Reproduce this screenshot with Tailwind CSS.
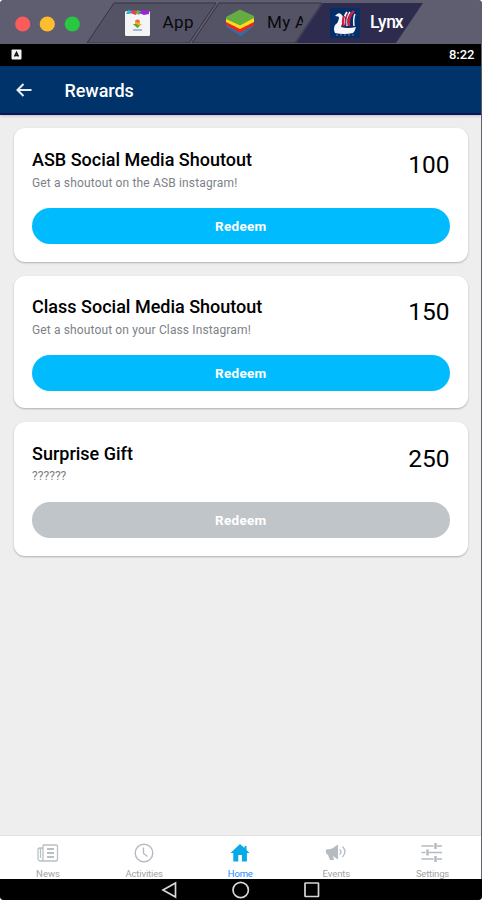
<!DOCTYPE html>
<html lang="en">
<head>
<meta charset="utf-8">
<title>Rewards</title>
<script src="https://cdn.jsdelivr.net/npm/@tailwindcss/browser@4"></script>
</head>
<body class="bg-white">
<div class="flex h-[900px] w-[482px] flex-col overflow-hidden rounded-[4px] bg-[#61616f] font-[Roboto,sans-serif]">
  <!-- Window title bar with tabs -->
  <header class="relative h-[43.500px] shrink-0 bg-[#5e5e70]">
    <svg class="absolute inset-0" width="482" height="43" viewBox="0 0 482 43">
      <path d="M87 43 114 3H216L189 43Z" fill="#535365" stroke="#343442"/>
      <path d="M192 43 219 3H322L295 43Z" fill="#535365" stroke="#343442"/>
      <path d="M296 43 323 3H423L396 43Z" fill="#2d2c4f"/>
      <circle cx="22.7" cy="24" r="7.6" fill="#fc5b5c"/>
      <circle cx="47.3" cy="24" r="7.6" fill="#fdbd2e"/>
      <circle cx="72.3" cy="24" r="7.6" fill="#28c940"/>
    </svg>
    <div class="relative flex h-[43px] items-center pt-[2px] pl-[124px] text-[17px] text-[#08080d]">
      <svg class="shrink-0" width="27" height="28" viewBox="0 0 27 28">
        <rect x="1" y="2" width="25" height="25" rx="1.5" fill="#f4f4f4"/>
        <path d="M2 5 4 1l4 1-2 3Z" fill="#22b9db"/><path d="M6 4 9 1l5 1-2 4Z" fill="#ef3b50"/><path d="M11 3 14 1l3 2-2 3Z" fill="#57bb46"/><path d="M15 4 18 1l7 1v3l-5 1Z" fill="#9c21da"/>
        <path d="M11 12q2.500-3 5 0v3h2l-4.500 4L9 15h2Z" fill="#f6ad20"/><path d="M11 12q2.500-3 5 0l-2 2Z" fill="#ed6554"/><path d="m9 15 4.500 4 2-2-3-2Z" fill="#50a944"/><path d="M9 21h9" stroke="#a3b9da" stroke-width="2"/>
      </svg>
      <span class="ml-[11.500px] w-[62px] tracking-[0.400px]">App</span>
      <svg class="shrink-0" width="31" height="29" viewBox="0 0 31 29">
        <path d="M1 14 15 6l14 7v5L16 28 1 19Z" fill="#2672b7"/>
        <path d="M1 13 15 6l14 6v5L15 25 1 17Z" fill="#e7281f"/>
        <path d="M1 11 15 5l14 5v4L15 21 1 14Z" fill="#ffdc19"/>
        <path d="M1 9 14 2q1-.5 2 0l13 6v2L16 17q-1 .5-2 0L1 11Z" fill="#65ad42"/>
      </svg>
      <span class="ml-[11.500px] w-[38px] overflow-hidden whitespace-nowrap tracking-[0.300px] [clip-path:polygon(0_0,100%_0,100%_25%,82%_100%,0_100%)]">My A</span>
      <svg class="ml-[25px] shrink-0" width="30" height="30" viewBox="0 0 30 30">
        <path d="M0 0h30v30H0Z" fill="#052f69"/>
        <path d="M5 8q3-4 6-2 3 3 2 6-1 4-2 7 7 2 15 0-1 4-3 6-9 2-18 0-2-4 0-8 4-3 4-8-2-1-4-1Z" fill="#f7f7fb"/>
        <path d="M17 4q-4 5-3 13" fill="none" stroke="#fff" stroke-width="1.800"/>
        <path d="M14 8q-2 6 0 10M24 3q-6 5-5 15" fill="none" stroke="#d81d43" stroke-width="2.300"/>
        <path d="M20 4q-5 6-3 14M25 6q-2 4-1 12" fill="none" stroke="#f4f5fa" stroke-width="1.500"/>
        <path d="M18 5q-3 6-2 12" fill="none" stroke="#d81d43" stroke-width="1.200"/>
        <path d="M6 27h18" fill="none" stroke="#7188ad" stroke-width="1" stroke-dasharray="2 2"/>
      </svg>
      <span class="ml-[10px] text-[17.500px] font-medium tracking-[-1.200px] text-white"><span class="tracking-[-0.300px]">Ly</span>nx</span>
    </div>
  </header>

  <!-- Android screen -->
  <main class="mr-[1.500px] flex min-h-0 flex-1 flex-col bg-[#eee]">
    <div class="flex h-[22px] shrink-0 items-center justify-between bg-black pr-[6px] pl-[11px]">
      <svg width="11" height="11" viewBox="0 0 11 11"><rect x=".5" y=".5" width="10" height="10" rx="1" fill="#f2f2f2"/><path d="m3.500 7.500 2-4 2 4M4 6.500h3" fill="none" stroke="#111" stroke-width="1.500"/></svg>
      <span class="mt-px text-[13px] font-medium text-white">8:22</span>
    </div>
    <div class="flex h-[49.500px] shrink-0 items-center border-b-2 border-[#0c1460] bg-[#003369] pl-[16px] text-white shadow-[0_1px_3px_#0003]">
      <svg class="mt-px" width="16" height="14" viewBox="0 0 16 14" fill="none" stroke="#e9edf5" stroke-width="2"><path d="M15.500 7H1.500M7.500 1l-6 6 6 6"/></svg>
      <h1 class="mt-[3px] ml-[32.500px] text-[18px] font-medium tracking-[-0.050px]">Rewards</h1>
    </div>

    <div class="flex min-h-0 flex-1 flex-col gap-[14px] pt-[13px] pr-[13px] pl-[14px]">
      <section class="h-[133.500px] rounded-[11px] bg-white px-[18px] pt-[21px] shadow-[0_1px_2px_#0004]">
        <div class="flex h-[59px] justify-between">
          <div>
            <h2 class="text-[18px] leading-[22px] font-medium text-black">ASB Social Media Shoutout</h2>
            <p class="mt-[2px] text-[12px] leading-[20px] tracking-[0.150px] text-[#7c8287]">Get a shoutout on the ASB instagram!</p>
          </div>
          <span class="text-[24.500px] leading-[32px] text-black">100</span>
        </div>
        <button class="block h-[35.500px] w-full rounded-full bg-[#00bcff] text-[13.500px] font-bold tracking-[0.300px] text-white">Redeem</button>
      </section>
      <section class="h-[132.500px] rounded-[11px] bg-white px-[18px] pt-[20.500px] shadow-[0_1px_2px_#0004]">
        <div class="flex h-[59px] justify-between">
          <div>
            <h2 class="text-[18px] leading-[22px] font-medium text-black">Class Social Media Shoutout</h2>
            <p class="mt-[2px] text-[12px] leading-[20px] tracking-[0.130px] text-[#7c8287]">Get a shoutout on your Class Instagram!</p>
          </div>
          <span class="text-[24.500px] leading-[32px] text-black">150</span>
        </div>
        <button class="block h-[35.500px] w-full rounded-full bg-[#00bcff] text-[13.500px] font-bold tracking-[0.300px] text-white">Redeem</button>
      </section>
      <section class="h-[133.500px] rounded-[11px] bg-white px-[18px] pt-[20.500px] shadow-[0_1px_2px_#0004]">
        <div class="flex h-[59.500px] justify-between">
          <div>
            <h2 class="text-[18px] leading-[22px] font-medium text-black">Surprise Gift</h2>
            <p class="mt-[1.500px] text-[12px] leading-[20px] tracking-[0.050px] text-[#7c8287]">??????</p>
          </div>
          <span class="text-[24.500px] leading-[32px] text-black">250</span>
        </div>
        <button class="block h-[35.500px] w-full rounded-full bg-[#c0c5c9] text-[13.500px] font-bold tracking-[0.300px] text-white">Redeem</button>
      </section>
    </div>

    <nav class="grid h-[44px] shrink-0 grid-cols-5 overflow-hidden border-t border-[#e2e2e2] bg-white text-center text-[9.500px] leading-[12px] text-[#a0a4a7]">
      <div class="flex flex-col items-center pt-[6px]">
        <svg width="24" height="22" viewBox="0 0 24 22" fill="none" stroke="#b9c0c4" stroke-width="1.300"><path d="M7 3h13q1.500 0 1.500 1.500V17q0 2-2 2H5q-3 0-3-3V8q0-2 2-2h3M7 3v14q0 2-2 2M4.500 6v10"/><path d="M11 7h7M11 11h7M11 15h7" stroke-width="1.800"/></svg>
        <span class="mt-[4px]">News</span>
      </div>
      <div class="flex flex-col items-center pt-[6px]">
        <svg width="24" height="22" viewBox="0 0 24 22" fill="none" stroke="#b5bbc0" stroke-width="1.400"><circle cx="12" cy="11" r="8.800"/><path d="M11.500 5.500v6l4 3"/></svg>
        <span class="mt-[4px] tracking-[-0.150px]">Activities</span>
      </div>
      <div class="flex flex-col items-center pt-[6px] text-[#168cff]">
        <svg width="24" height="22" viewBox="0 0 24 22" fill="#08a9e4"><path d="M12 2 2.500 11h2.800v8.500h5V13h3.600v6.500h5V11h2.600l-3-3V4h-2v2Z"/></svg>
        <span class="mt-[4px] tracking-[-0.200px]">Home</span>
      </div>
      <div class="flex flex-col items-center pt-[6px]">
        <svg width="24" height="22" viewBox="0 0 24 22"><path d="M2 7.500q4 0 7-1.500l5-3.500v15L9 14l1 4H6l-2-5q-3-2-2-5.500Z" fill="#b4bbc1"/><path d="M15.500 7.500q3 2.500 0 5M18.500 4.500q5 5 0 10.500" fill="none" stroke="#b4bbc1" stroke-width="1.300"/></svg>
        <span class="mt-[4px] tracking-[-0.100px]">Events</span>
      </div>
      <div class="flex flex-col items-center pt-[6px]">
        <svg width="24" height="22" viewBox="0 0 24 22" fill="none" stroke="#b5bbc0" stroke-width="1.500"><path d="M1.500 4h12M17 4h5M1.500 10.500h4M9 10.500h13M1.500 17h12M17 17h5"/><path d="M15.500 1v6M7.500 7.500v6M15.500 14v6" stroke-width="2.500"/></svg>
        <span class="mt-[4px] tracking-[-0.200px]">Settings</span>
      </div>
    </nav>
  </main>

  <!-- Android system navigation -->
  <footer class="flex h-[21px] shrink-0 items-center bg-black pl-[161px]">
    <svg width="160" height="21" viewBox="0 0 160 21" fill="none" stroke="#d6d6d6" stroke-width="1.700"><path d="M14.500 4v14L2 11Z"/><circle cx="79.700" cy="11" r="7.700"/><rect x="144" y="4" width="13.500" height="13.500" rx=".5"/></svg>
  </footer>
</div>
</body>
</html>
